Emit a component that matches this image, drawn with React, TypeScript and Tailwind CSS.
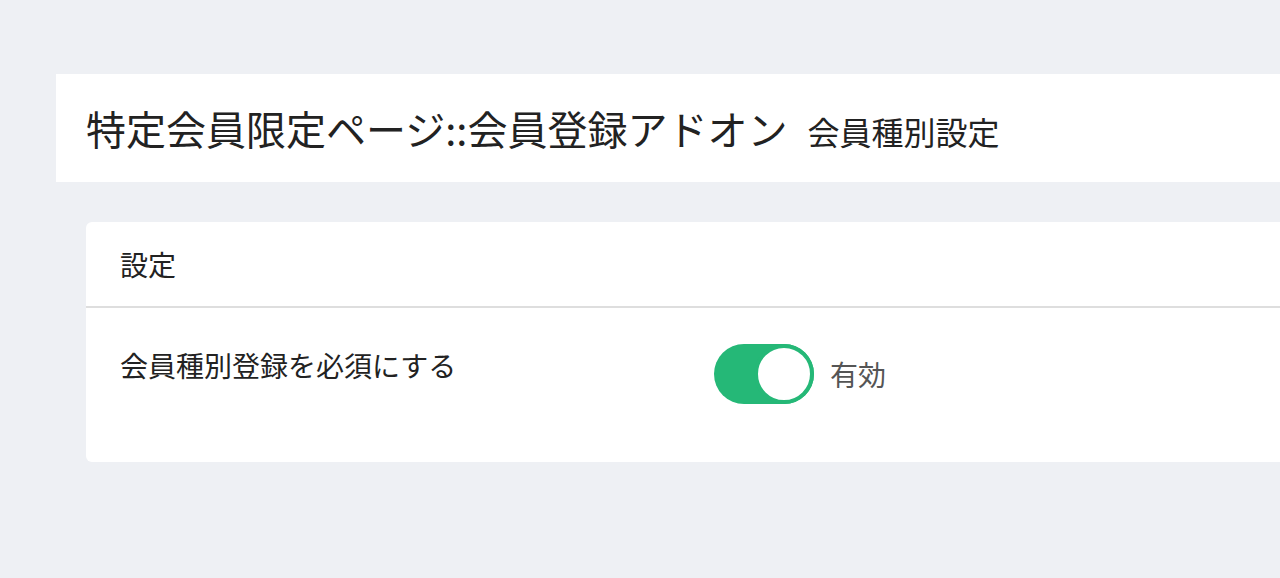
export default function App() {
  return (
    <div className="min-h-[578px] h-[578px] overflow-hidden bg-[#eef0f4] pt-[74px] pl-[56px] text-[#222] [font-family:'Noto_Sans_CJK_JP','Noto_Sans',sans-serif]">
      {/* page title */}
      <div className="flex h-[108px] items-baseline bg-white pl-[30px] pt-[26px]">
        <h2 className="text-[40px] leading-[56px] font-normal">特定会員限定ページ::会員登録アドオン</h2>
        <span className="ml-[20px] text-[32px] leading-[56px]">会員種別設定</span>
      </div>

      {/* settings card */}
      <div className="mt-[40px] ml-[30px] -mr-[20px] rounded-[6px] bg-white">
        <div className="flex h-[86px] items-center border-b-2 border-[#dedede] pl-[34px] pr-[36px]">
          <span className="text-[28px] leading-[42px]">設定</span>
        </div>
        <div className="flex items-start pl-[34px] pr-[36px] pt-[36px] pb-[58px]">
          <div className="w-[594px] text-[28px] leading-[42px]">会員種別登録を必須にする</div>
          <div className="flex items-center">
            <div className="flex h-[60px] w-[100px] justify-end rounded-full bg-[#25b877]">
              <div className="h-[60px] w-[60px] rounded-full border-[4px] border-[#25b877] bg-white" />
            </div>
            <span className="ml-[16px] text-[28px] leading-[42px] text-[#555]">有効</span>
          </div>
        </div>
      </div>
    </div>
  );
}
